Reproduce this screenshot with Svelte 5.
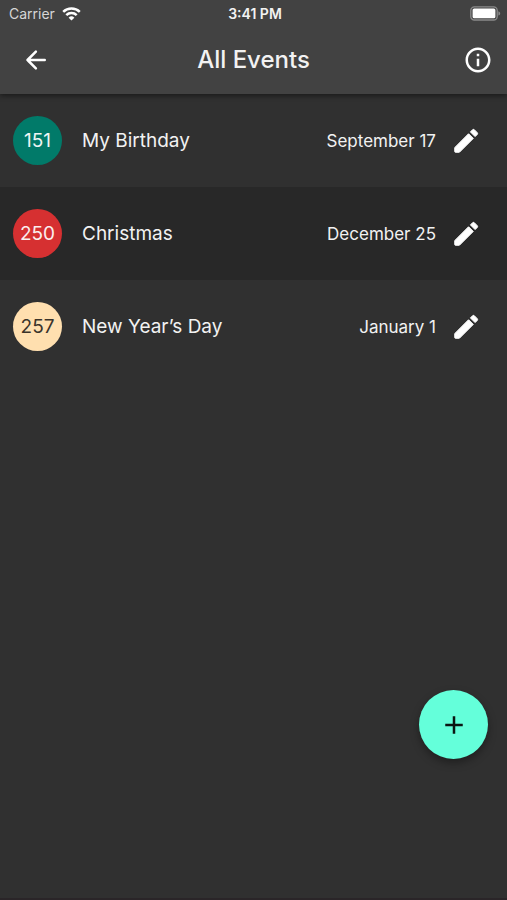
<script>
	const events = [
		{ days: 151, name: 'My Birthday', date: 'September 17', bg: '#017a69', fg: '#eef5f4' },
		{ days: 250, name: 'Christmas', date: 'December 25', bg: '#d63031', fg: '#fbeeee' },
		{ days: 257, name: 'New Year’s Day', date: 'January 1', bg: '#ffdfaf', fg: '#3a332a' }
	];
</script>

<svelte:head>
	<title>All Events</title>
</svelte:head>

<div class="screen">
	<header>
		<div class="status">
			<div class="carrier">
				<span>Carrier</span>
				<svg width="19" height="14" viewBox="0 0 19 14" fill="none" stroke="#fff" stroke-width="2.5">
					<path d="M1.2 4.8a11.8 11.8 0 0 1 16.6 0" />
					<path d="M4.3 8.1a7.4 7.4 0 0 1 10.4 0" />
					<path d="M9.5 13.6 6.6 10.7a4.1 4.1 0 0 1 5.8 0z" fill="#fff" stroke="none" />
				</svg>
			</div>
			<span class="time">3:41 PM</span>
			<svg class="battery" width="31" height="15" viewBox="0 0 31 15">
				<rect x="0.8" y="0.8" width="26.4" height="13.2" rx="3.6" fill="none" stroke="#8b8b8b" stroke-width="1.3" />
				<rect x="2.6" y="2.5" width="22.8" height="9.8" rx="1.6" fill="#fff" />
				<path d="M28.4 5.2c2.4.8 2.4 3.6 0 4.4z" fill="#8b8b8b" />
			</svg>
		</div>
		<div class="bar">
			<button class="icon" aria-label="Back">
				<svg viewBox="0 0 24 24" fill="none" stroke="#fff" stroke-width="2" stroke-linecap="round" stroke-linejoin="round">
					<path d="M19 12H5.2M11.9 5.3 5.2 12l6.7 6.7" />
				</svg>
			</button>
			<h1>All Events</h1>
			<button class="icon" aria-label="Info">
				<svg viewBox="0 0 24 24" fill="#fff">
					<path d="M11 7h2v2h-2zm0 4h2v6h-2zm1-9C6.48 2 2 6.48 2 12s4.48 10 10 10 10-4.48 10-10S17.52 2 12 2zm0 18c-4.41 0-8-3.59-8-8s3.59-8 8-8 8 3.59 8 8-3.59 8-8 8z" />
				</svg>
			</button>
		</div>
	</header>

	<ul>
		{#each events as event}
			<li>
				<span class="days" style="background: {event.bg}; color: {event.fg}">{event.days}</span>
				<span class="name">{event.name}</span>
				<span class="date">{event.date}</span>
				<button class="icon" aria-label="Edit {event.name}">
					<svg viewBox="0 0 24 24" fill="#fff" stroke="#fff" stroke-width="0.8" stroke-linejoin="round">
						<path d="M3 17.46v3.04c0 .28.22.5.5.5h3.04c.13 0 .26-.05.35-.15L17.81 9.94l-3.75-3.75L3.15 17.1c-.1.1-.15.22-.15.36z" />
						<path d="M21.01 6.74c.39-.39.39-1.02 0-1.41l-2.34-2.34c-.39-.39-1.02-.39-1.41 0l-1.73 1.73 3.75 3.75 1.73-1.73z" />
					</svg>
				</button>
			</li>
		{/each}
	</ul>

	<button class="add" aria-label="Add event">
		<svg viewBox="0 0 24 24" fill="#0b1512">
			<path d="M19 13h-6v6h-2v-6H5v-2h6V5h2v6h6z" />
		</svg>
	</button>
</div>

<style>
	:global(body) {
		background: #303030;
	}
	.screen {
		min-height: 100vh;
		box-sizing: border-box;
		background: #303030;
		border-bottom: 2px solid #2a2528;
		color: #f2f2f2;
		font-family: Inter, 'Liberation Sans', sans-serif;
	}
	header {
		position: relative;
		padding-bottom: 2px;
		background: #424242;
		box-shadow: 0 2px 5px rgba(0, 0, 0, .45);
	}
	.status {
		display: grid;
		grid-template-columns: 1fr auto 1fr;
		align-items: center;
		height: 27px;
		padding: 0 6px 0 9px;
		font-size: 14px;
	}
	.carrier {
		display: flex;
		align-items: center;
		gap: 7px;
		color: #d6d6d6;
	}
	.time {
		font-weight: 600;
	}
	.battery {
		justify-self: end;
	}
	.bar {
		display: grid;
		grid-template-columns: 1fr auto 1fr;
		align-items: center;
		height: 65px;
		padding: 0 6px;
	}
	.bar .icon:first-child {
		margin-left: 6px;
	}
	.bar .icon:last-child {
		justify-self: end;
	}
	h1 {
		margin: 0;
		font-size: 24px;
		font-weight: 500;
	}
	button {
		display: flex;
		align-items: center;
		justify-content: center;
		padding: 0;
		border: 0;
		cursor: pointer;
	}
	.icon {
		width: 47px;
		height: 47px;
		background: none;
	}
	.icon svg,
	.add svg {
		width: 30px;
		height: 30px;
	}
	ul {
		margin: 0;
		padding: 0;
		list-style: none;
	}
	li {
		display: flex;
		align-items: center;
		height: 93px;
		padding: 0 18px 0 13px;
	}
	li:nth-child(even) {
		background: #282828;
	}
	.days {
		display: flex;
		align-items: center;
		justify-content: center;
		width: 49px;
		height: 49px;
		border-radius: 50%;
		font-size: 19px;
	}
	.name {
		flex: 1;
		margin-left: 20px;
		font-size: 19px;
	}
	.date {
		margin-right: 6px;
		font-size: 17px;
	}
	.add {
		position: fixed;
		right: 19px;
		bottom: 141px;
		width: 69px;
		height: 69px;
		border-radius: 50%;
		background: #64ffda;
		box-shadow: 0 4px 8px rgba(0, 0, 0, .35);
	}
</style>
